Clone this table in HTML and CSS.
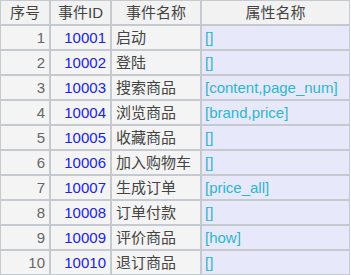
FILE: index.html
```html
<!DOCTYPE html>
<html>
<head>
<meta charset="utf-8">
<link rel="stylesheet" href="styles.css">
</head>
<body>
<table class="grid">
  <thead>
    <tr><th class="c-no">序号</th><th class="c-id">事件ID</th><th class="c-name">事件名称</th><th class="c-attr">属性名称</th></tr>
  </thead>
  <tbody>
    <tr><td class="no">1</td><td class="id">10001</td><td class="name">启动</td><td class="attr">[]</td></tr>
    <tr><td class="no">2</td><td class="id">10002</td><td class="name">登陆</td><td class="attr">[]</td></tr>
    <tr><td class="no">3</td><td class="id">10003</td><td class="name">搜索商品</td><td class="attr">[content,page_num]</td></tr>
    <tr><td class="no">4</td><td class="id">10004</td><td class="name">浏览商品</td><td class="attr">[brand,price]</td></tr>
    <tr><td class="no">5</td><td class="id">10005</td><td class="name">收藏商品</td><td class="attr">[]</td></tr>
    <tr><td class="no">6</td><td class="id">10006</td><td class="name">加入购物车</td><td class="attr">[]</td></tr>
    <tr><td class="no">7</td><td class="id">10007</td><td class="name">生成订单</td><td class="attr">[price_all]</td></tr>
    <tr><td class="no">8</td><td class="id">10008</td><td class="name">订单付款</td><td class="attr">[]</td></tr>
    <tr><td class="no">9</td><td class="id">10009</td><td class="name">评价商品</td><td class="attr">[how]</td></tr>
    <tr><td class="no">10</td><td class="id">10010</td><td class="name">退订商品</td><td class="attr">[]</td></tr>
  </tbody>
</table>
</body>
</html>
```
FILE: styles.css
```css
html, body {
  margin: 0;
  padding: 0;
  background: #ffffff;
}
.grid {
  border-collapse: separate;
  border-spacing: 0;
  table-layout: fixed;
  width: 350px;
  font-family: "Liberation Sans", "Noto Sans CJK SC", sans-serif;
  font-size: 15px;
}
.grid th, .grid td {
  border: 1px solid #c5cad0;
  height: 23px;
  padding: 0 4px;
  box-sizing: border-box;
  height: 25px;
  line-height: 23px;
  white-space: nowrap;
  overflow: hidden;
}
.grid th {
  background: #f2f2f2;
  color: #444;
  font-weight: normal;
  text-align: center;
}
.c-no { width: 50px; }
.c-id { width: 61px; }
.c-name { width: 90px; }
.c-attr { width: 149px; }
.grid td {
  background: #f4f4f4;
}
.no {
  text-align: right;
  color: #666;
}
.id {
  text-align: right;
  color: #2020ee;
  padding-right: 3px;
}
.name {
  color: #444;
  text-align: left;
}
.grid td.attr {
  background: #e8e8fb;
  color: #2bb7cc;
  text-align: left;
  padding-left: 3px;
}
```
